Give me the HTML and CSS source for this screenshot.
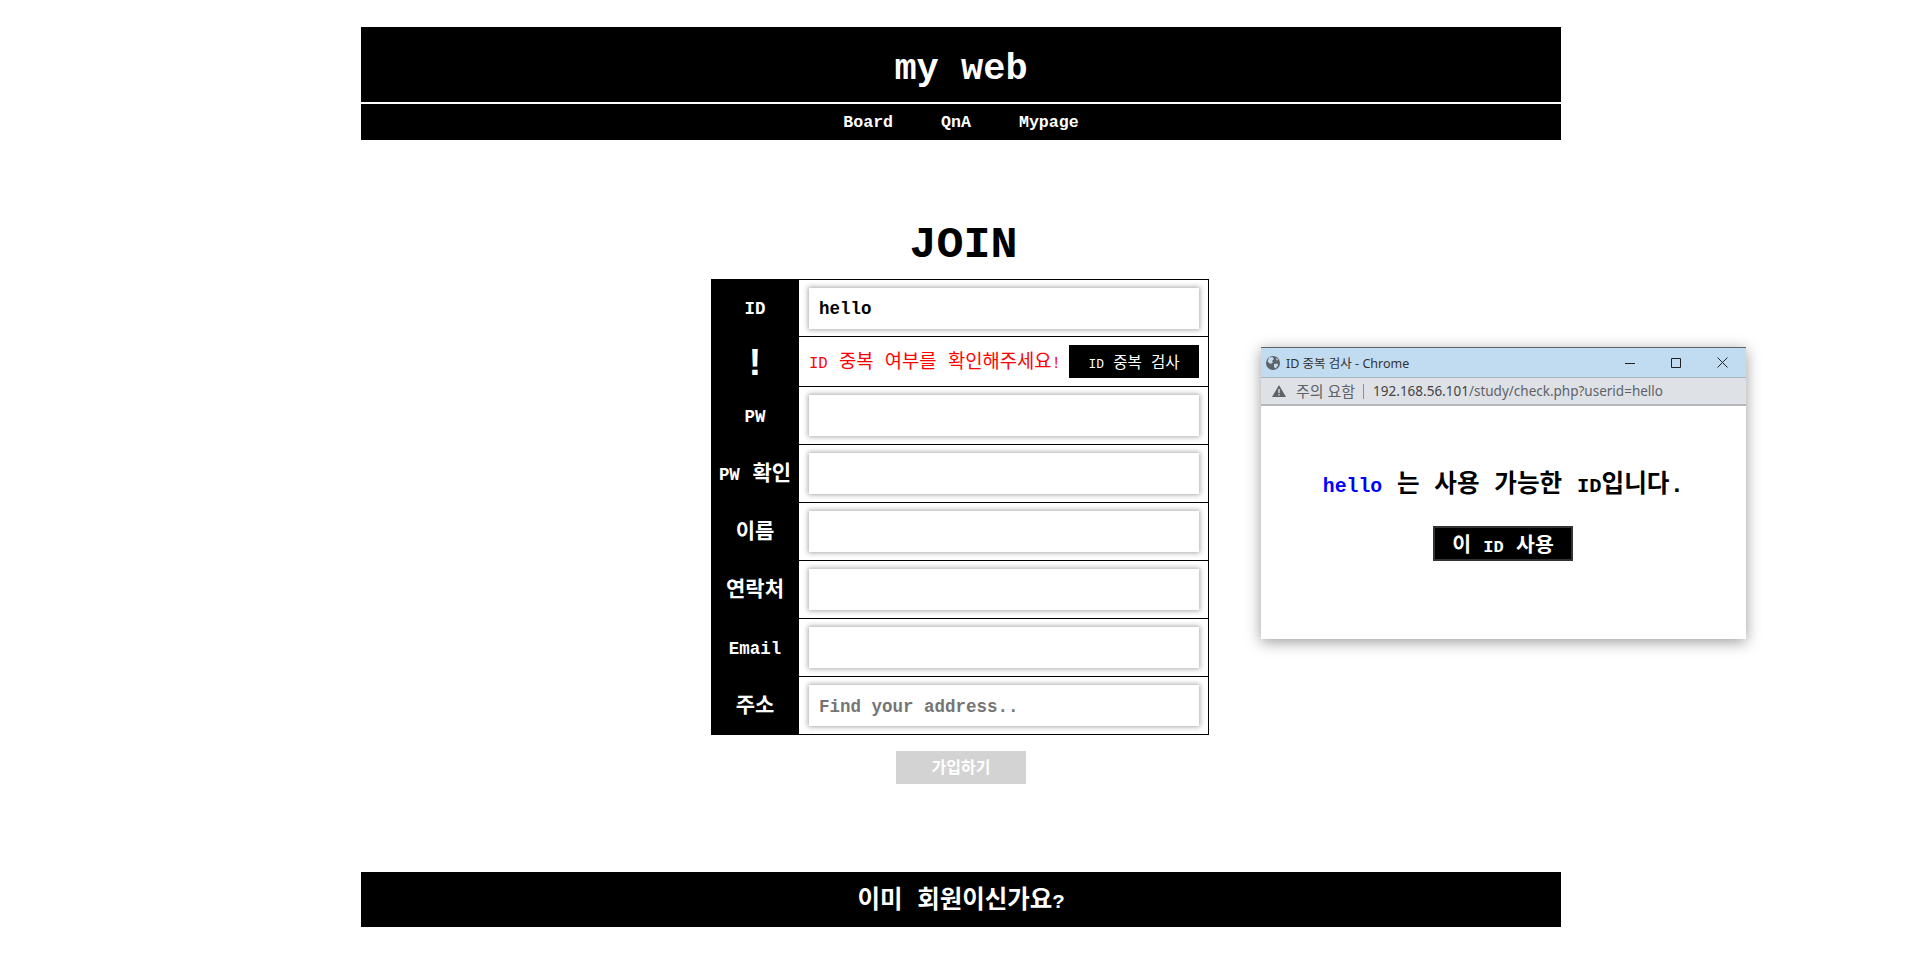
FILE: index.html
```html
<!DOCTYPE html>
<html lang="ko">
<head>
  <meta charset="UTF-8">
  <title>my web</title>
  <link rel="stylesheet" href="styles.css">
</head>
<body>

<div class="page">
  <div class="header">my web</div>
  <div class="nav">
    <a href="#">Board</a>
    <a href="#">QnA</a>
    <a href="#">Mypage</a>
  </div>

  <h1 class="join-title">JOIN</h1>

  <table class="join-table">
    <tr>
      <th><span class="en">ID</span></th>
      <td><input type="text" value="hello"></td>
    </tr>
    <tr class="check-row">
      <th><span class="warn-mark">!</span></th>
      <td>
        <div class="check-line">
          <span class="check-msg"><span class="en">ID</span> 중복 여부를 확인해주세요<span class="en">!</span></span>
          <button type="button" class="check-btn"><span class="en">ID</span> 중복 검사</button>
        </div>
      </td>
    </tr>
    <tr>
      <th><span class="en">PW</span></th>
      <td><input type="password"></td>
    </tr>
    <tr>
      <th class="ko-label"><span class="en">PW</span> 확인</th>
      <td><input type="password"></td>
    </tr>
    <tr>
      <th class="ko-label">이름</th>
      <td><input type="text"></td>
    </tr>
    <tr>
      <th class="ko-label">연락처</th>
      <td><input type="text"></td>
    </tr>
    <tr>
      <th><span class="en">Email</span></th>
      <td><input type="text"></td>
    </tr>
    <tr>
      <th class="ko-label">주소</th>
      <td><input type="text" placeholder="Find your address.."></td>
    </tr>
  </table>

  <div class="submit-wrap">
    <button type="button" class="submit-btn">가입하기</button>
  </div>

  <div class="footer-bar">이미 회원이신가요<span class="en">?</span></div>
</div>

<!-- popup window -->
<div class="popup">
  <div class="popup-title">
    <svg class="globe" width="14" height="14" viewBox="0 0 14 14">
      <circle cx="7" cy="7" r="7" fill="#5f6368"/>
      <path d="M3 1.5 L6.5 1 L8 3 L6 5 L7 6.5 L4.5 8 L1.5 5.5 Z M8 8 L11.5 7.5 L12 9.5 L9.5 12.5 L8 11 Z M10 1.8 L12.5 4 L10.5 4.5 Z" fill="#c1dbf1"/>
    </svg>
    <span class="popup-name">ID 중복 검사 - Chrome</span>
    <svg class="win-btn win-min" width="10" height="10" viewBox="0 0 10 10"><path d="M0 5.5 H10" stroke="#222" fill="none"/></svg>
    <svg class="win-btn win-max" width="10" height="10" viewBox="0 0 10 10"><path d="M.5 .5 H9.5 V9.5 H.5 Z" stroke="#222" fill="none"/></svg>
    <svg class="win-btn win-close" width="11" height="11" viewBox="0 0 11 11"><path d="M.5 .5 L10.5 10.5 M10.5 .5 L.5 10.5" stroke="#222" fill="none"/></svg>
  </div>
  <div class="popup-addr">
    <svg width="14" height="12" viewBox="0 0 14 12">
      <path d="M7 0 L14 12 H0 Z" fill="#5f6368"/>
      <path d="M6.3 4 H7.7 V8 H6.3 Z M6.3 9 H7.7 V10.4 H6.3 Z" fill="#dee1e6"/>
    </svg>
    <span class="addr-warn">주의 요함</span>
    <span class="addr-url"><b>192.168.56.101</b>/study/check.php?userid=hello</span>
  </div>
  <div class="popup-body">
    <p class="popup-msg"><span class="hello">hello</span> 는 사용 가능한 <span class="en">ID</span>입니다.</p>
    <button type="button" class="use-btn">이 <span class="en">ID</span> 사용</button>
  </div>
</div>

</body>
</html>
```

FILE: styles.css
```css
body {
  margin: 0;
  padding: 27px 0 0 2px;
  background-color: white;
  font-family: "Liberation Mono", "Noto Sans CJK KR", monospace;
  font-weight: bold;
  color: black;
}
.en {
  font-family: "Liberation Mono", monospace;
  font-size: 0.83em;
}
.page {
  width: 1200px;
  margin: 0 auto;
}
.header {
  height: 75px;
  line-height: 84px;
  background-color: black;
  color: white;
  font-size: 37px;
  text-align: center;
  border-bottom: 2px solid white;
}
.nav {
  height: 36px;
  background-color: black;
  display: flex;
  justify-content: center;
  align-items: center;
  gap: 48px;
}
.nav a {
  color: white;
  font-size: 16.6px;
  text-decoration: none;
  padding-top: 1px;
}
.join-title {
  margin: 0 0 0 5px;
  height: 139px;
  box-sizing: border-box;
  padding-top: 76px;
  font-size: 45px;
  line-height: 60px;
  text-align: center;
  font-weight: bold;
}
.join-table {
  width: 498px;
  margin-left: 350px;
  border-collapse: collapse;
  border: 1px solid black;
}
.join-table tr {
  height: 58px;
}
.join-table tr:first-child {
  height: 57px;
}
.join-table tr.check-row {
  height: 50px;
}
.join-table th {
  width: 87px;
  padding: 1px 0 0;
  background-color: black;
  color: white;
  font-size: 21px;
  border: 1px solid black;
  white-space: nowrap;
}
.join-table th.ko-label {
  padding-bottom: 6px;
}
.join-table td {
  padding: 0 9px 0 10px;
  border: 1px solid black;
}
.join-table input {
  display: block;
  box-sizing: border-box;
  width: 390px;
  height: 41px;
  padding: 2px 10px 0;
  border: none;
  outline: none;
  box-shadow: 0 0 5px 1px #aaa;
  font-family: "Liberation Mono", monospace;
  font-size: 17.5px;
  font-weight: bold;
}
.join-table input::placeholder {
  color: #757575;
}
.warn-mark {
  display: inline-block;
  padding-top: 5px;
  font-size: 38px;
  line-height: 34px;
}
.check-line {
  display: flex;
  justify-content: space-between;
  align-items: center;
}
.check-msg {
  color: red;
  font-size: 18.8px;
  font-weight: normal;
  white-space: nowrap;
  padding-bottom: 3px;
}
.check-btn {
  width: 130px;
  height: 33px;
  padding: 0;
  border: none;
  background-color: black;
  color: white;
  font-family: inherit;
  font-size: 15.5px;
  font-weight: normal;
}
.submit-wrap {
  padding-top: 16px;
  text-align: center;
}
.submit-btn {
  width: 130px;
  height: 33px;
  padding: 0 0 3px;
  border: none;
  background-color: #d3d3d3;
  color: white;
  font-family: inherit;
  font-size: 16px;
  font-weight: bold;
}
.footer-bar {
  margin-top: 88px;
  height: 55px;
  line-height: 59px;
  background-color: black;
  color: white;
  font-size: 24.5px;
  font-weight: bold;
  text-align: center;
}
.popup {
  position: absolute;
  left: 1261px;
  top: 347px;
  width: 485px;
  height: 292px;
  display: flex;
  flex-direction: column;
  background-color: white;
  box-shadow: 0 3px 14px rgba(0,0,0,0.4);
}
.popup-title {
  height: 31px;
  flex: none;
  display: flex;
  align-items: center;
  padding-left: 5px;
  background-color: #c1dbf1;
  border-top: 1px solid #5f6368;
  border-bottom: 1px solid #a9b4bd;
  box-sizing: border-box;
  font-family: "Noto Sans", "Noto Sans CJK KR", sans-serif;
  font-size: 12.5px;
  font-weight: normal;
  color: #333;
}
.popup-name {
  margin-left: 6px;
  flex: 1;
}
.win-btn {
  flex: none;
}
.win-min {
  margin-right: 36px;
}
.win-max {
  margin-right: 36px;
}
.win-close {
  margin-right: 18px;
}
.popup-addr {
  height: 28px;
  flex: none;
  box-sizing: border-box;
  display: flex;
  align-items: center;
  padding-left: 11px;
  background-color: #dee1e6;
  border-bottom: 2px solid #b4b6b9;
  font-family: "Noto Sans", "Noto Sans CJK KR", sans-serif;
  font-size: 13.5px;
  font-weight: normal;
  color: #5f6368;
}
.addr-warn {
  margin-left: 10px;
  padding-right: 8px;
  border-right: 1px solid #8d8f92;
  font-size: 15px;
  line-height: 15px;
}
.addr-url {
  margin-left: 9px;
}
.addr-url b {
  font-weight: normal;
  color: #444;
}
.popup-body {
  flex: 1;
  text-align: center;
  padding-top: 65px;
}
.popup-msg {
  margin: 0;
  height: 55px;
  line-height: 30px;
  font-size: 24.6px;
}
.hello {
  color: blue;
  font-family: "Liberation Mono", monospace;
  font-size: 19.8px;
}
.use-btn {
  width: 140px;
  height: 35px;
  padding: 0 0 2px;
  margin-right: 1px;
  background-color: black;
  color: white;
  border: 2px solid #333;
  font-family: inherit;
  font-size: 20.5px;
  font-weight: bold;
}
```
